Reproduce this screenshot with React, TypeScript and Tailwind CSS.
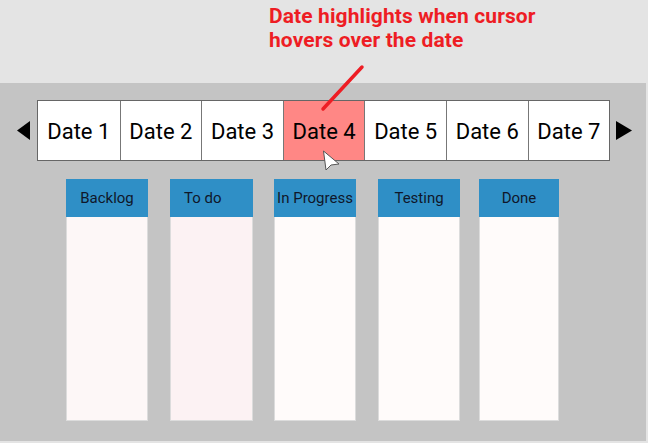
import React from "react";

const dates = ["Date 1", "Date 2", "Date 3", "Date 4", "Date 5", "Date 6", "Date 7"];

const columns = [
  { title: "Backlog", cls: "ml-[66px] w-[82px]", body: "bg-[#fdf7f7]" },
  { title: "To do", cls: "ml-[22px] w-[83px]", body: "bg-[#fcf2f3]", align: "pl-[14px] justify-start" },
  { title: "In Progress", cls: "ml-[21px] w-[82px]", body: "bg-[#fffbfa]" },
  { title: "Testing", cls: "ml-[22px] w-[82px]", body: "bg-[#fffbfa]" },
  { title: "Done", cls: "ml-[19px] w-[80px]", body: "bg-[#fffbfa]" },
];

export default function App() {
  return (
    <div className="relative w-[648px] h-[443px] bg-[#e4e4e4] overflow-hidden" style={{ fontFamily: "Roboto, 'Liberation Sans', sans-serif" }}>
      <div className="h-[83px] pl-[269px] pt-[4px]">
        <div className="text-[21px] leading-[24px] font-bold text-[#ee1d24] tracking-[0.1px]">
          <div>Date highlights when cursor</div>
          <div>hovers over the date</div>
        </div>
      </div>
      <div className="w-[646px] h-[358px] bg-[#c4c4c4] pt-[17px]">
        <div className="flex items-center h-[61px]">
          <div className="w-[37px] flex justify-end pr-[7px]">
            <svg width="13" height="19" viewBox="0 0 13 19"><polygon points="13,0 13,19 0,9.5" fill="#000" /></svg>
          </div>
          <div className="flex h-[61px] border border-[#666] bg-white">
            {dates.map((d, i) => (
              <div
                key={d}
                className={
                  "w-[81.6px] flex items-center justify-center pt-[2px] text-[22px] text-black " +
                  (i > 0 ? "border-l border-[#777] " : "") +
                  (i === 3 ? "bg-[#ff8785]" : "bg-white")
                }
              >
                {d}
              </div>
            ))}
          </div>
          <div className="pl-[6px]">
            <svg width="16" height="19" viewBox="0 0 16 19"><polygon points="0,0 0,19 16,9.5" fill="#000" /></svg>
          </div>
        </div>
        <div className="flex mt-[18px]">
          {columns.map((c) => (
            <div key={c.title} className={"flex flex-col " + c.cls}>
              <div className={"h-[38px] bg-[#2f8fc6] flex items-center text-[15px] text-[#0f172a] " + (c.align ? c.align : "justify-center")}>
                {c.title}
              </div>
              <div className={"h-[204px] border-x border-b border-[#dcdcdc] " + c.body}></div>
            </div>
          ))}
        </div>
      </div>
      <svg className="absolute left-0 top-0 pointer-events-none" width="648" height="443">
        <line x1="362" y1="67" x2="323" y2="109" stroke="#ee1d24" strokeWidth="3.5" strokeLinecap="round" />
        <polygon points="323.5,151 339,164 331,165 326,170" fill="#fff" stroke="#555" strokeWidth="1" strokeLinejoin="round" />
      </svg>
    </div>
  );
}
